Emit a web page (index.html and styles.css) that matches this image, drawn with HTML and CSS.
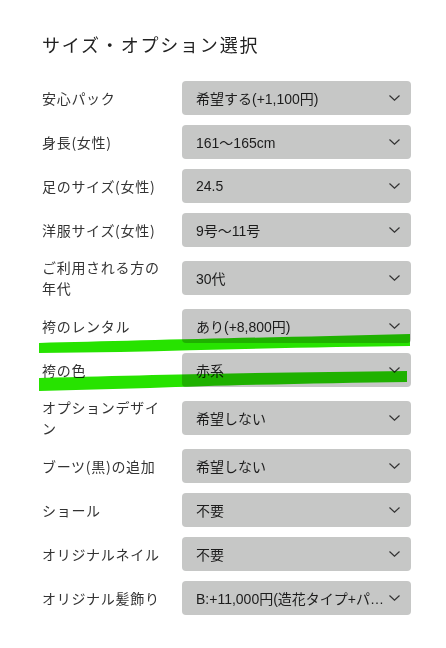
FILE: index.html
```html
<!DOCTYPE html>
<html lang="ja">
<head>
<meta charset="utf-8">
<title>サイズ・オプション選択</title>
<link rel="stylesheet" href="styles.css">
</head>
<body>
<div class="page">
  <h2 class="title">サイズ・オプション選択</h2>
  <div class="form">
    <div class="row"><div class="label">安心パック</div><div class="select"><span class="val">希望する(+1,100円)</span><svg class="chev" viewBox="0 0 11 6"><path d="M0.5 0.5 L5.5 5.2 L10.5 0.5"/></svg></div></div>
    <div class="row"><div class="label">身長(女性)</div><div class="select"><span class="val">161〜165cm</span><svg class="chev" viewBox="0 0 11 6"><path d="M0.5 0.5 L5.5 5.2 L10.5 0.5"/></svg></div></div>
    <div class="row"><div class="label">足のサイズ(女性)</div><div class="select"><span class="val">24.5</span><svg class="chev" viewBox="0 0 11 6"><path d="M0.5 0.5 L5.5 5.2 L10.5 0.5"/></svg></div></div>
    <div class="row"><div class="label">洋服サイズ(女性)</div><div class="select"><span class="val">9号〜11号</span><svg class="chev" viewBox="0 0 11 6"><path d="M0.5 0.5 L5.5 5.2 L10.5 0.5"/></svg></div></div>
    <div class="row"><div class="label">ご利用される方の年代</div><div class="select"><span class="val">30代</span><svg class="chev" viewBox="0 0 11 6"><path d="M0.5 0.5 L5.5 5.2 L10.5 0.5"/></svg></div></div>
    <div class="row"><div class="label">袴のレンタル</div><div class="select"><span class="val">あり(+8,800円)</span><svg class="chev" viewBox="0 0 11 6"><path d="M0.5 0.5 L5.5 5.2 L10.5 0.5"/></svg></div></div>
    <div class="row"><div class="label">袴の色</div><div class="select"><span class="val">赤系</span><svg class="chev" viewBox="0 0 11 6"><path d="M0.5 0.5 L5.5 5.2 L10.5 0.5"/></svg></div></div>
    <div class="row"><div class="label">オプションデザイン</div><div class="select"><span class="val">希望しない</span><svg class="chev" viewBox="0 0 11 6"><path d="M0.5 0.5 L5.5 5.2 L10.5 0.5"/></svg></div></div>
    <div class="row"><div class="label">ブーツ(黒)の追加</div><div class="select"><span class="val">希望しない</span><svg class="chev" viewBox="0 0 11 6"><path d="M0.5 0.5 L5.5 5.2 L10.5 0.5"/></svg></div></div>
    <div class="row"><div class="label">ショール</div><div class="select"><span class="val">不要</span><svg class="chev" viewBox="0 0 11 6"><path d="M0.5 0.5 L5.5 5.2 L10.5 0.5"/></svg></div></div>
    <div class="row"><div class="label">オリジナルネイル</div><div class="select"><span class="val">不要</span><svg class="chev" viewBox="0 0 11 6"><path d="M0.5 0.5 L5.5 5.2 L10.5 0.5"/></svg></div></div>
    <div class="row"><div class="label">オリジナル髪飾り</div><div class="select"><span class="val">B:+11,000円(造花タイプ+パール)</span><svg class="chev" viewBox="0 0 11 6"><path d="M0.5 0.5 L5.5 5.2 L10.5 0.5"/></svg></div></div>
  </div>
</div>
<svg class="marks" viewBox="0 0 446 648" width="446" height="648">
  <path d="M39 343 C 120 341, 230 338, 330 336 L 410 334 L 410 346 C 330 347, 230 349, 120 352 L 39 353 Z"/>
  <path d="M39 378 C 150 375, 230 373, 330 372 L 407 371 L 407 382 C 330 383, 230 385, 150 388 L 39 391 Z"/>
</svg>
</body>
</html>
```

FILE: styles.css
```css
html, body {
  margin: 0;
  padding: 0;
  background: #fff;
}
body {
  position: relative;
  width: 446px;
  height: 648px;
  overflow: hidden;
  font-family: "Liberation Sans", "Noto Sans CJK JP", sans-serif;
  color: #333;
}
.page {
  padding: 30px 35px 0 42px;
}
.title {
  margin: 0 0 23px 0;
  font-family: "Noto Sans CJK JP", sans-serif;
  font-weight: 400;
  font-size: 18px;
  line-height: 28px;
  letter-spacing: 1.8px;
  color: #222;
}
.form {
  display: flex;
  flex-direction: column;
  gap: 10px;
}
.row {
  display: flex;
  align-items: center;
  gap: 14px;
}
.label {
  width: 126px;
  flex: none;
  font-family: "Noto Sans CJK JP", sans-serif;
  font-size: 14px;
  line-height: 21px;
  letter-spacing: 0.7px;
  color: #333;
}
.select {
  width: 229px;
  height: 34px;
  box-sizing: border-box;
  flex: none;
  display: flex;
  align-items: center;
  background: #c6c7c6;
  border-radius: 4px;
  padding: 0 11px 0 14px;
  font-size: 14px;
  color: #1c1c1c;
}
.val {
  flex: 1;
  min-width: 0;
  white-space: nowrap;
  overflow: hidden;
  text-overflow: ellipsis;
}
.chev {
  width: 11px;
  height: 6px;
  flex: none;
  margin-left: 3px;
  fill: none;
  stroke: #333;
  stroke-width: 1.2;
}
.marks {
  position: absolute;
  left: 0;
  top: 0;
  pointer-events: none;
  mix-blend-mode: multiply;
}
.marks path {
  fill: #27e300;
}
```
